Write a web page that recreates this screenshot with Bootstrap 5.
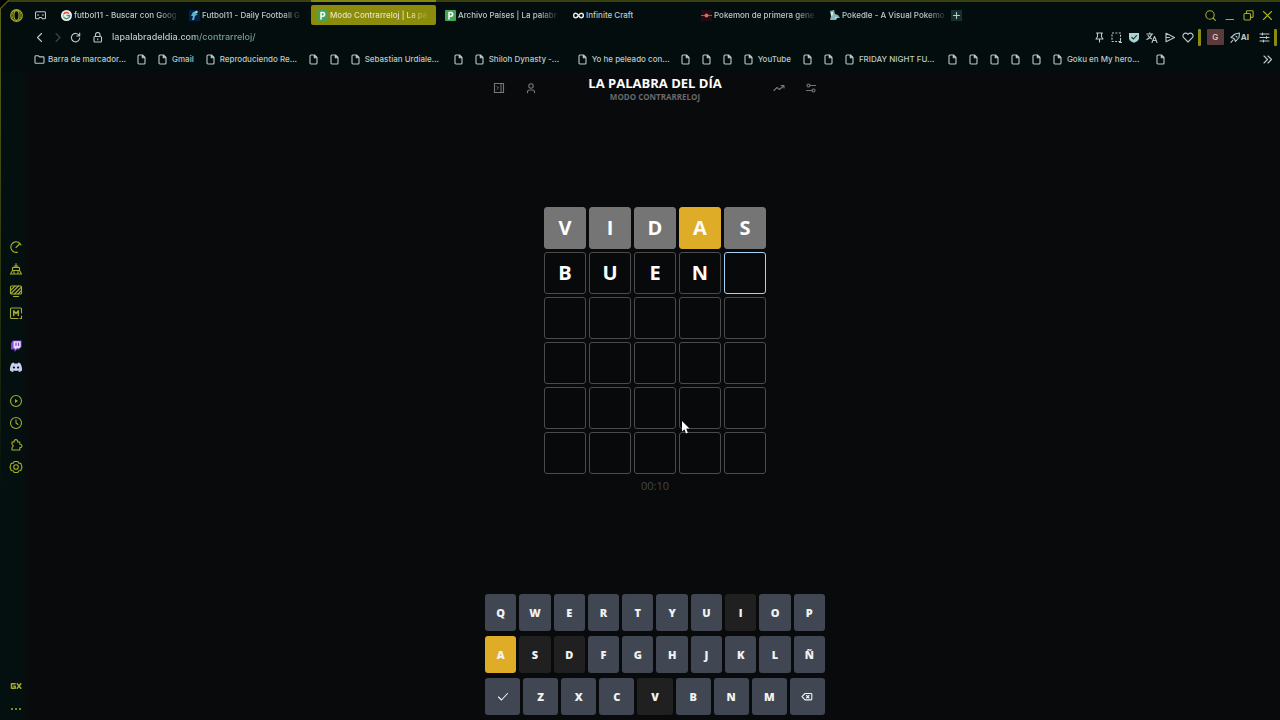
<!DOCTYPE html>
<html lang="es" data-bs-theme="dark">
<head>
<meta charset="utf-8">
<meta name="viewport" content="width=device-width, initial-scale=1">
<title>Modo Contrarreloj | La palabra del día</title>
<link rel="stylesheet" href="https://cdn.jsdelivr.net/npm/bootstrap@5.3.0/dist/css/bootstrap.min.css">
<style>
:root{--chrome:#040d0d;--ink:#b9cac9;--lime:#a3ad2b;--olive:#8b8b0c}
body{font-family:Inter,Roboto,sans-serif;font-size:8px;font-weight:500;line-height:12px;background:#090a0c;color:var(--ink)}
svg{display:block;flex:none;fill:none;stroke:currentColor;stroke-width:1.1;stroke-linecap:round;stroke-linejoin:round}
svg[stroke=none]{stroke:none}
a{color:inherit;text-decoration:none}
button{color:inherit;background:none;border:0;padding:0;font-weight:inherit}
.browser-top{background:var(--chrome);border-top:2px solid #3b400f}
.edge{position:absolute;left:0;top:8px;width:1px;height:480px;background:linear-gradient(#5c6218,#2a340d 60%,transparent)}
.corner{position:absolute;left:0;top:0}
.tab-row{height:26px;padding-left:10px;padding-right:7px}
.spaces{margin:0 9px 0 12px}
.tab-item{position:relative;flex:0 1 125px;min-width:0;height:20px;padding:0 2px 0 6px;gap:2px;border-radius:2px}
.tab-label{overflow:hidden;white-space:nowrap}
.fade-end{-webkit-mask-image:linear-gradient(90deg,#000 82%,rgba(0,0,0,.15))}
.tab-item.current{background:var(--olive);color:#e4e5bd}
.tab-item.current::before{content:"";position:absolute;left:0;right:0;top:-5px;height:2px;background:#85880f}
.tab-gap{gap:3px}
.new-tab{width:11px;height:11px;background:#16302e}
.win-btns{gap:8px;color:var(--lime)}
.addr-row{height:18px;padding-left:34px;padding-right:3px}
.addr{background:linear-gradient(90deg,#c5d5d3 84px,#7ca39f 84px);-webkit-background-clip:text;background-clip:text;color:transparent;border:0;padding:0;outline:0;font-size:9px;line-height:14px;min-width:0}
.nav-btns{gap:7px}
.faded{opacity:.3}
.lock{margin:0 6px 0 8px}
.tools{gap:6px}
.bar{width:3px;height:17px;margin-left:-2px;background:var(--olive);border-radius:1px}
.profile{width:17px;height:16px;background:#5b3b39;color:#e3d5d3;border-radius:1px}
.ai{font-weight:700}
.marks-row{height:26px;padding-left:34px;padding-right:7px}
.marks{gap:12px;overflow:hidden;min-width:0}
.marks a{gap:5px;white-space:nowrap}
.marks .folder{gap:3px}
.cut{width:77px}
.side{width:30px;padding:168px 0 8px 2px;background:linear-gradient(90deg,#04100f 20px,#090a0c);color:var(--lime)}
.side-stack{gap:8px}
.site{font-family:"Open Sans","Noto Sans",sans-serif}
.site-head{width:340px;max-width:100%;padding:2px 8px 3px}
.site-head .tools-pair{gap:20px;color:#77787a}
.title-main{font-size:13px;line-height:18px;font-weight:700;color:#fff}
.title-sub{font-size:8px;line-height:10px;font-weight:700;color:#68696b}
.board{display:grid;grid-template-columns:repeat(5,42px);grid-auto-rows:42px;gap:3px}
.cell{position:relative;display:flex;align-items:center;justify-content:center;border:1px solid #4a4b4c;border-radius:3px;color:#fff;font-size:20px;line-height:28px;font-weight:700;background:#08090b}
.cell.off{background:#757575;border-color:#757575}
.cell.near{background:#dfac28;border-color:#dfac28}
.cell.active{border-color:#a5d2f5}
.pointer{position:absolute;left:2px;top:33px;z-index:2}
.timer{font-size:11px;font-weight:400;line-height:14px;color:#444547;margin-top:5px}
.keyboard{width:342px;max-width:100%;padding:0 1px 5px;gap:5px}
.krow{gap:3px}
.key{flex:1;height:37px;border-radius:3px;background:#414752;color:#f1f2f3;font-size:11px;line-height:16px;font-weight:800;display:flex;align-items:center;justify-content:center}
.key.used{background:#202020}
.key.near{background:#dfac28}
</style>
</head>
<body>
<svg width="0" height="0" class="position-absolute" aria-hidden="true">
<symbol id="page" viewBox="0 0 9 11"><path d="M1 2a1 1 0 0 1 1-1h3.500L8 3.500V9a1 1 0 0 1-1 1H2a1 1 0 0 1-1-1zM5.300 1v2.800H8"/></symbol>
</svg>
<div class="d-flex flex-column min-vh-100 position-relative">
<div class="edge"></div>
<svg class="corner" width="9" height="9" viewBox="0 0 9 9"><path d="M0 0H9L0 9z" fill="#000" stroke="none"/><path d="M.5 8.500l8-8" stroke="#5c6218"/></svg>

<header class="browser-top">
<div class="tab-row d-flex align-items-center">
  <button type="button" aria-label="Opera"><svg width="13" height="13" viewBox="0 0 13 13" stroke="none"><g stroke="#a3ad2b" stroke-width="1.200"><circle cx="6.500" cy="6.500" r="5.800"/><ellipse cx="6.500" cy="6.500" rx="2.600" ry="4.800"/><path d="M4 1.500C1.500 4 1.500 9 4 11.500M9 1.500c2.500 2.500 2.500 7.500 0 10" stroke-width=".8"/></g></svg></button>
  <button type="button" class="spaces" aria-label="Espacios"><svg width="11" height="9" viewBox="0 0 11 9"><path d="M1.500.8h8a1 1 0 0 1 1 1v5a1 1 0 0 1-1 1H7.300L6.500 6.500h-2l-.8 1.300H1.500a1 1 0 0 1-1-1v-5a1 1 0 0 1 1-1zM2.500 4h1.200M7.300 4h1.200"/></svg></button>
  <nav class="tab-gap d-flex align-items-center flex-grow-1" aria-label="Pestañas">
    <a href="#" class="tab-item d-flex align-items-center"><svg width="11" height="11" viewBox="0 0 11 11" stroke="none"><circle cx="5.500" cy="5.500" r="5.500" fill="#eef2f2"/><g stroke-width="1.500" stroke-linecap="butt" fill="none"><path d="M7.800 3.400A3.200 3.200 0 0 0 2.700 4" stroke="#df4b3d"/><path d="M2.700 4a3.200 3.200 0 0 0 0 3" stroke="#e8b92d"/><path d="M2.700 7a3.200 3.200 0 0 0 5 .8" stroke="#3c9d57"/><path d="M7.700 7.800a3 3 0 0 0 1-2.200H5.600" stroke="#477fd9"/></g></svg><span class="tab-label fade-end">futbol11 - Buscar con Goog</span></a>
    <a href="#" class="tab-item d-flex align-items-center"><svg width="11" height="11" viewBox="0 0 11 11" stroke="none"><path fill="#06204a" d="M0 0h11v11H0z"/><path d="M4 2l4-1-1 3 2 0-3 2-1 4-2 0 1-4H2z" fill="#55b6cf"/><circle cx="7.500" cy="2" r="1.200" fill="#d4d89a"/></svg><span class="tab-label fade-end">Futbol11 - Daily Football G</span></a>
    <a href="#" class="tab-item current d-flex align-items-center" aria-current="page"><svg width="11" height="11" viewBox="0 0 11 11" stroke="none"><rect width="11" height="11" rx="1" fill="#43a556"/><path d="M4 9V2.500h1.800a1.800 1.800 0 0 1 0 3.700H4" stroke="#fff" stroke-width="1.500"/></svg><span class="tab-label fade-end">Modo Contrarreloj | La pa</span></a>
    <a href="#" class="tab-item d-flex align-items-center"><svg width="11" height="11" viewBox="0 0 11 11" stroke="none"><rect width="11" height="11" rx="1" fill="#43a556"/><path d="M4 9V2.500h1.800a1.800 1.800 0 0 1 0 3.700H4" stroke="#fff" stroke-width="1.500"/></svg><span class="tab-label fade-end">Archivo Países | La palabr</span></a>
    <a href="#" class="tab-item d-flex align-items-center"><svg width="11" height="11" viewBox="0 0 11 11"><path stroke="#e8eeee" stroke-width="1.400" d="M5.500 5.500C4.500 4 3.800 3.300 2.800 3.300a2.200 2.200 0 0 0 0 4.400c1 0 1.700-.7 2.700-2.200s1.700-2.200 2.700-2.200a2.200 2.200 0 0 1 0 4.400c-1 0-1.700-.7-2.700-2.200z"/></svg><span class="tab-label">Infinite Craft</span></a>
    <a href="#" class="tab-item d-flex align-items-center"><svg width="11" height="11" viewBox="0 0 11 11" stroke="none"><path fill="#200d10" d="M0 0h11v11H0z"/><path d="M0 5.500h11" stroke="#b8434a"/><circle cx="5.500" cy="5.500" r="2" fill="#ed6265"/></svg><span class="tab-label fade-end">Pokemon de primera gene</span></a>
    <a href="#" class="tab-item d-flex align-items-center"><svg width="11" height="11" viewBox="0 0 11 11" stroke="none"><path d="M1 1l4-1 1 4 3 1 2 3-3 0-1 2-6 0 1-4z" fill="#83b9bd"/><path d="M2 2l2 0 0 3-2 1zM6 7l2 0-1 2z" fill="#d5e7e5"/></svg><span class="tab-label fade-end">Pokedle - A Visual Pokemo</span></a>
    <button type="button" class="new-tab d-flex align-items-center justify-content-center" aria-label="Nueva pestaña"><svg width="7" height="7" viewBox="0 0 7 7"><path d="M3.500.5v6M.5 3.500h6"/></svg></button>
  </nav>
  <div class="win-btns d-flex align-items-center">
    <button type="button" aria-label="Buscar"><svg width="11" height="11" viewBox="0 0 11 11"><circle cx="5" cy="5" r="4.200"/><path d="M8 8l2.400 2.400"/></svg></button>
    <button type="button" aria-label="Minimizar"><svg width="11" height="11" viewBox="0 0 11 11"><path d="M2 9.500h7.500"/></svg></button>
    <button type="button" aria-label="Restaurar"><svg width="11" height="11" viewBox="0 0 11 11"><rect x="1" y="3.500" width="6.500" height="6.500" rx="1"/><path d="M3.500 3.500V1.600a.8.8 0 0 1 .8-.8h5a.8.800 0 0 1 .8.8v5a.8.8 0 0 1-.8.800H7.500"/></svg></button>
    <button type="button" aria-label="Cerrar"><svg width="11" height="11" viewBox="0 0 11 11"><path d="M1.500 1.500l8 8M9.500 1.500l-8 8"/></svg></button>
  </div>
</div>

<div class="addr-row d-flex align-items-center">
  <div class="nav-btns d-flex align-items-center">
    <button type="button" aria-label="Atrás"><svg width="11" height="11" viewBox="0 0 11 11"><path d="M7.500 1.500l-4 4 4 4"/></svg></button>
    <button type="button" class="faded" aria-label="Adelante"><svg width="11" height="11" viewBox="0 0 11 11"><path d="M4 1.500l4 4-4 4"/></svg></button>
    <button type="button" aria-label="Recargar"><svg width="11" height="11" viewBox="0 0 11 11"><path d="M9.200 3.600A4.200 4.200 0 1 0 9.700 6M9.700 1v3H6.700"/></svg></button>
  </div>
  <svg class="lock" width="17" height="11" viewBox="0 0 17 11"><rect x="5" y="4.500" width="7.500" height="5.500" rx="1"/><path d="M6.500 4.500V2.700a2.200 2.200 0 0 1 4.500 0v1.800M8.750 6.800v1"/></svg>
  <input class="addr flex-grow-1 fw-medium" type="text" value="lapalabradeldia.com/contrarreloj/" aria-label="Dirección">
  <div class="tools d-flex align-items-center">
    <button type="button" aria-label="Fijar"><svg width="11" height="11" viewBox="0 0 11 11"><path d="M2.500 1h6M3.500 1v3.800L2 7h7L7.500 4.800V1M5.500 7v3"/></svg></button>
    <button type="button" aria-label="Captura"><svg width="11" height="11" viewBox="0 0 11 11"><rect x="1" y="1" width="8.500" height="8.500" stroke-dasharray="2 1.400" stroke-linecap="butt"/><path d="M8.500 10.500h2M9.500 8.500v2"/></svg></button>
    <button type="button" aria-label="Bloqueador"><svg width="12" height="11" viewBox="0 0 12 11"><path d="M1 1h10v5c0 2.500-2.500 4-5 4.700C3.500 10 1 8.500 1 6z" fill="#a9d4d6" stroke="none"/><path d="M3.800 5.300l1.700 1.700 3-3.300" stroke="#10312f"/></svg></button>
    <button type="button" aria-label="Traducir"><svg width="12" height="11" viewBox="0 0 12 11"><path d="M.8 2h6M3.800.8V2M5.800 2C5 4.500 3 6.500.8 7.500M2 3.500c.8 1.500 2 2.500 3.500 3.300M6 10.500l2.500-6 2.500 6M7 8.500h3"/></svg></button>
    <button type="button" aria-label="Enviar"><svg width="12" height="11" viewBox="0 0 12 11"><path d="M2 1.200l8.500 4.300L2 9.800zM2 5.500h3.500"/></svg></button>
    <button type="button" aria-label="Favorito"><svg width="12" height="11" viewBox="0 0 12 11"><path d="M6 10L1.700 5.700a2.600 2.600 0 0 1 0-3.700A2.600 2.600 0 0 1 6 2.500 2.600 2.600 0 0 1 10.300 2a2.600 2.600 0 0 1 0 3.700z"/></svg></button>
    <span class="bar"></span>
    <button type="button" class="profile d-flex align-items-center justify-content-center" aria-label="Perfil G">G</button>
    <button type="button" class="ai d-flex align-items-center"><svg width="11" height="11" viewBox="0 0 11 11"><path d="M1 5.500l4-3.500 4.500-1L9 5.500l-3.500 4-1-2.500L3 6zM3 8l-2 2.300M6 4.200l1 1"/></svg>AI</button>
    <button type="button" class="ms-1" aria-label="Configuración rápida"><svg width="11" height="11" viewBox="0 0 11 11"><path d="M1 2h9M1 5.500h9M1 9h9M3.500 1v2M7.500 4.500v2M4.500 8v2"/></svg></button>
    <span class="bar"></span>
  </div>
</div>

<div class="marks-row d-flex align-items-center justify-content-between">
  <nav class="marks d-flex align-items-center" aria-label="Marcadores">
    <a href="#" class="folder d-flex align-items-center"><svg width="11" height="11" viewBox="0 0 11 11"><path d="M1 2.500a.8.8 0 0 1 .8-.8h2.400l1.200 1.200h3.800a.8.8 0 0 1 .8.8v4.800a.8.8 0 0 1-.8.800H1.800A.8.8 0 0 1 1 8.500z"/></svg><span class="cut">Barra de marcador...</span></a>
    <a href="#" aria-label="Marcador"><svg width="9" height="11"><use href="#page"/></svg></a>
    <a href="#" class="d-flex align-items-center"><svg width="9" height="11"><use href="#page"/></svg><span>Gmail</span></a>
    <a href="#" class="d-flex align-items-center"><svg width="9" height="11"><use href="#page"/></svg><span class="cut">Reproduciendo Re...</span></a>
    <a href="#" aria-label="Marcador"><svg width="9" height="11"><use href="#page"/></svg></a>
    <a href="#" aria-label="Marcador"><svg width="9" height="11"><use href="#page"/></svg></a>
    <a href="#" class="d-flex align-items-center"><svg width="9" height="11"><use href="#page"/></svg><span class="cut">Sebastian Urdiale...</span></a>
    <a href="#" aria-label="Marcador"><svg width="9" height="11"><use href="#page"/></svg></a>
    <a href="#" class="d-flex align-items-center"><svg width="9" height="11"><use href="#page"/></svg><span class="cut">Shiloh Dynasty -...</span></a>
    <a href="#" class="d-flex align-items-center"><svg width="9" height="11"><use href="#page"/></svg><span class="cut">Yo he peleado con...</span></a>
    <a href="#" aria-label="Marcador"><svg width="9" height="11"><use href="#page"/></svg></a>
    <a href="#" aria-label="Marcador"><svg width="9" height="11"><use href="#page"/></svg></a>
    <a href="#" aria-label="Marcador"><svg width="9" height="11"><use href="#page"/></svg></a>
    <a href="#" class="d-flex align-items-center"><svg width="9" height="11"><use href="#page"/></svg><span>YouTube</span></a>
    <a href="#" aria-label="Marcador"><svg width="9" height="11"><use href="#page"/></svg></a>
    <a href="#" aria-label="Marcador"><svg width="9" height="11"><use href="#page"/></svg></a>
    <a href="#" class="d-flex align-items-center"><svg width="9" height="11"><use href="#page"/></svg><span class="cut">FRIDAY NIGHT FU...</span></a>
    <a href="#" aria-label="Marcador"><svg width="9" height="11"><use href="#page"/></svg></a>
    <a href="#" aria-label="Marcador"><svg width="9" height="11"><use href="#page"/></svg></a>
    <a href="#" aria-label="Marcador"><svg width="9" height="11"><use href="#page"/></svg></a>
    <a href="#" aria-label="Marcador"><svg width="9" height="11"><use href="#page"/></svg></a>
    <a href="#" aria-label="Marcador"><svg width="9" height="11"><use href="#page"/></svg></a>
    <a href="#" class="d-flex align-items-center"><svg width="9" height="11"><use href="#page"/></svg><span class="cut">Goku en My hero...</span></a>
    <a href="#" aria-label="Marcador"><svg width="9" height="11"><use href="#page"/></svg></a>
  </nav>
  <button type="button" aria-label="Más marcadores"><svg width="11" height="11" viewBox="0 0 11 11"><path d="M2 2l3.500 3.500L2 9M6 2l3.500 3.500L6 9"/></svg></button>
</div>
</header>

<div class="d-flex flex-grow-1">
<aside class="side d-flex flex-column justify-content-between flex-shrink-0">
  <div class="side-stack d-flex flex-column align-items-center">
    <button type="button" aria-label="GX Control"><svg width="14" height="14" viewBox="0 0 14 14"><path d="M12 5a5.300 5.300 0 1 0-3.500 7.200M7 7.500L10.500 4M9.500 2.300l1 1"/></svg></button>
    <button type="button" aria-label="GX Cleaner"><svg width="14" height="14" viewBox="0 0 14 14"><path d="M7 1.500v4M3.500 5.500h7v3h-7zM3.500 8.500L1.500 12h11l-2-3.500M5 9.500V12M9 9.500V12M5 4h4"/></svg></button>
    <button type="button" aria-label="Fondos"><svg width="14" height="14" viewBox="0 0 14 14"><rect x="1.500" y="2" width="11" height="8" rx="1"/><path d="M2 6l4-4M2 9.500L9.500 2M5.500 10L12.500 3M9 10l3.500-3.500M4.500 12.500h5"/></svg></button>
    <button type="button" aria-label="Mods"><svg width="14" height="14" viewBox="0 0 14 14"><path d="M12.500 7V3a1 1 0 0 0-1-1h-9a1 1 0 0 0-1 1v8.500a1 1 0 0 0 1 1H9M11 12.500h1.500V10"/><path d="M4.700 9.500V4.800L7 7.500l2.300-2.700v4.700" stroke-width="1.500"/></svg></button>
    <button type="button" class="mt-2 pt-1" aria-label="Twitch"><svg width="14" height="12" viewBox="0 0 14 12" stroke="none"><path d="M2 3l2-2.500h8.500V7L10 9.500H8L5.500 12V9.500H2z" fill="#8245cf"/><path d="M4.500 1.200h7.200v5.500L10 8.300H7.800L6 9.800V8.300H4.500z" fill="#e5daf5"/><path d="M7 3v2.500M9.500 3v2.500" stroke="#8245cf" stroke-width="1.200"/></svg></button>
    <button type="button" class="pb-2 mb-1" aria-label="Discord"><svg width="14" height="14" viewBox="0 0 14 14"><path d="M4.500 2.500L3 3C1.500 5 .8 7.500 1 10.500c1 .8 2 1.200 3 1.400l.8-1.300c1.500.4 3 .4 4.400 0l.8 1.300c1-.2 2-.6 3-1.400.2-3-.5-5.500-2-7.500l-1.500-.5-.7 1H5.200z" fill="#c7cfee" stroke="none"/><circle cx="4.900" cy="7.500" r="1.100" fill="#071110" stroke="none"/><circle cx="9.100" cy="7.500" r="1.100" fill="#071110" stroke="none"/></svg></button>
    <button type="button" aria-label="Reproductor"><svg width="14" height="14" viewBox="0 0 14 14"><circle cx="7" cy="7" r="5.500"/><path d="M6 5l3 2-3 2z" fill="currentColor" stroke="none"/></svg></button>
    <button type="button" aria-label="Historial"><svg width="14" height="14" viewBox="0 0 14 14"><circle cx="7" cy="7" r="5.500"/><path d="M7 3.800V7l2 1.500"/></svg></button>
    <button type="button" aria-label="Extensiones"><svg width="14" height="14" viewBox="0 0 14 14"><path d="M3 4h2.200a1.800 1.800 0 1 1 3.400 0h2.200v2.300a1.700 1.700 0 1 1 0 3.300V12H3V9.800L4.300 8 3 6.200z"/></svg></button>
    <button type="button" aria-label="Configuración"><svg width="14" height="14" viewBox="0 0 14 14"><path d="M5.200 1.500h3.600l1 1.700 2 .2L13 7l-1.200 3.500-2 .3-1 1.700H5.200l-1-1.700-2-.3L1 7l1.200-3.600 2-.2z"/><circle cx="7" cy="7" r="2.300"/></svg></button>
  </div>
  <div class="d-flex flex-column align-items-center">
    <button type="button" aria-label="GX"><svg width="12" height="8" viewBox="0 0 12 8"><path stroke-width="1.500" d="M5.200 1.800H1.500v4.500h3.700V4.200H3.800M7.200 1.800l3.600 4.500M10.800 1.800L7.200 6.300"/></svg></button>
    <button type="button" class="mt-3" aria-label="Más"><svg width="12" height="6" viewBox="0 0 12 6" stroke="none"><g fill="currentColor"><circle cx="2" cy="3" r="1"/><circle cx="6" cy="3" r="1"/><circle cx="10" cy="3" r="1"/></g></svg></button>
  </div>
</aside>

<main class="site flex-grow-1 d-flex flex-column align-items-center">
  <div class="site-head d-flex justify-content-between">
    <div class="tools-pair d-flex align-items-center">
      <button type="button" aria-label="Menú"><svg width="12" height="12" viewBox="0 0 12 12"><rect x="1.500" y="1.500" width="9" height="9"/><path d="M8 1.500v9M4 4.500L5.500 6 4 7.500" stroke-width="1"/></svg></button>
      <button type="button" aria-label="Cuenta"><svg width="12" height="12" viewBox="0 0 12 12"><circle cx="6" cy="4" r="2.200"/><path d="M2.500 10.800V9.500a2 2 0 0 1 2-1.500h3a2 2 0 0 1 2 1.500v1.300"/></svg></button>
    </div>
    <div class="text-center">
      <h1 class="title-main m-0">LA PALABRA DEL DÍA</h1>
      <div class="title-sub">MODO CONTRARRELOJ</div>
    </div>
    <div class="tools-pair d-flex align-items-center">
      <button type="button" aria-label="Estadísticas"><svg width="12" height="12" viewBox="0 0 12 12"><path d="M1 8.500l3-3 2.500 2L11 3.500M8 3.500h3v2.500"/></svg></button>
      <button type="button" aria-label="Ajustes"><svg width="12" height="12" viewBox="0 0 12 12"><circle cx="3.500" cy="3.500" r="1.500"/><circle cx="8.500" cy="8.500" r="1.500"/><path d="M5 3.500h5.500M1.500 8.500H7"/></svg></button>
    </div>
  </div>

  <section class="flex-grow-1 d-flex flex-column align-items-center justify-content-center" aria-label="Tablero">
    <div class="board">
      <div class="cell off">V</div><div class="cell off">I</div><div class="cell off">D</div><div class="cell near">A</div><div class="cell off">S</div>
      <div class="cell">B</div><div class="cell">U</div><div class="cell">E</div><div class="cell">N</div><div class="cell active"></div>
      <div class="cell"></div><div class="cell"></div><div class="cell"></div><div class="cell"></div><div class="cell"></div>
      <div class="cell"></div><div class="cell"></div><div class="cell"></div><div class="cell"></div><div class="cell"></div>
      <div class="cell"></div><div class="cell"></div><div class="cell"></div><div class="cell"><svg class="pointer" width="8" height="13" viewBox="0 0 8 13"><path d="M0 0v10.500l2.400-2.200L4 12.500l1.800-.8L4.200 7.500H7.500z" fill="#fff" stroke="none"/></svg></div><div class="cell"></div>
      <div class="cell"></div><div class="cell"></div><div class="cell"></div><div class="cell"></div><div class="cell"></div>
    </div>
    <div class="timer">00:10</div>
  </section>

  <section class="keyboard d-flex flex-column" aria-label="Teclado">
    <div class="krow d-flex"><button type="button" class="key">Q</button><button type="button" class="key">W</button><button type="button" class="key">E</button><button type="button" class="key">R</button><button type="button" class="key">T</button><button type="button" class="key">Y</button><button type="button" class="key">U</button><button type="button" class="key used">I</button><button type="button" class="key">O</button><button type="button" class="key">P</button></div>
    <div class="krow d-flex"><button type="button" class="key near">A</button><button type="button" class="key used">S</button><button type="button" class="key used">D</button><button type="button" class="key">F</button><button type="button" class="key">G</button><button type="button" class="key">H</button><button type="button" class="key">J</button><button type="button" class="key">K</button><button type="button" class="key">L</button><button type="button" class="key">Ñ</button></div>
    <div class="krow d-flex"><button type="button" class="key" aria-label="Enviar palabra"><svg width="12" height="12" viewBox="0 0 12 12"><path d="M1.500 6l3 3 6-6.500"/></svg></button><button type="button" class="key">Z</button><button type="button" class="key">X</button><button type="button" class="key">C</button><button type="button" class="key used">V</button><button type="button" class="key">B</button><button type="button" class="key">N</button><button type="button" class="key">M</button><button type="button" class="key" aria-label="Borrar"><svg width="12" height="10" viewBox="0 0 12 10"><path d="M4 1.500h6a.8.8 0 0 1 .8.8v4.800a.8.8 0 0 1-.8.800H4L1 4.700zM5.500 3.500L8 6M8 3.500L5.500 6"/></svg></button></div>
  </section>
</main>
</div>
</div>
<script src="https://cdn.jsdelivr.net/npm/bootstrap@5.3.0/dist/js/bootstrap.bundle.min.js"></script>
</body>
</html>
